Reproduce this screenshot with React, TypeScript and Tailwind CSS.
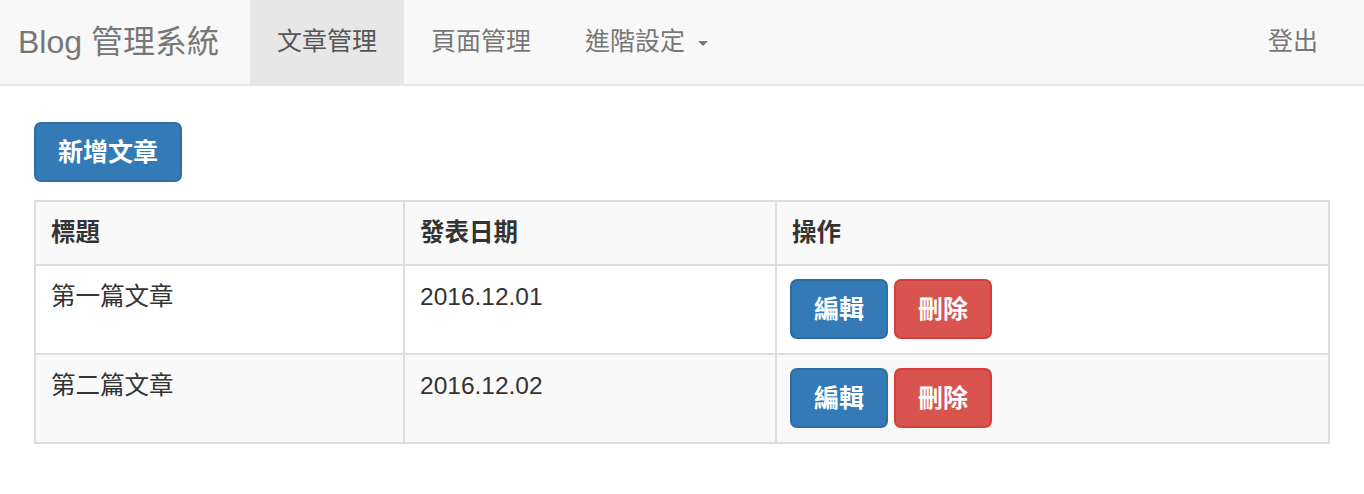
import React from "react";

const posts = [
  { title: "第一篇文章", date: "2016.12.01" },
  { title: "第二篇文章", date: "2016.12.02" },
];

function NavItem({ label, active, caret }: { label: string; active?: boolean; caret?: boolean }) {
  return (
    <a
      href="#"
      className={
        active
          ? "flex items-center h-full px-[27px] bg-[#e7e7e7] text-[#555]"
          : "flex items-center h-full px-[27px] text-[#777]"
      }
    >
      {label}
      {caret && (
        <span className="ml-[13px] mt-[2px] w-0 h-0 border-l-[5px] border-r-[5px] border-t-[5px] border-l-transparent border-r-transparent border-t-[#777]" />
      )}
    </a>
  );
}

function Btn({ children, kind }: { children: React.ReactNode; kind: "primary" | "danger" }) {
  return (
    <button
      className={
        kind === "primary"
          ? "h-[60px] px-[22px] rounded-[7px] border-2 border-[#2e6da4] bg-[#337ab7] text-white font-bold text-[25px] leading-none"
          : "h-[60px] px-[22px] rounded-[7px] border-2 border-[#d43f3a] bg-[#d9534f] text-white font-bold text-[25px] leading-none"
      }
    >
      {children}
    </button>
  );
}

export default function App() {
  return (
    <div
      className="min-h-[494px] bg-white text-[#333]"
      style={{ fontFamily: '"Liberation Sans", "Noto Sans CJK TC", sans-serif' }}
    >
      <nav className="flex h-[86px] bg-[#f8f8f8] border-b-2 border-[#e7e7e7] text-[25px]">
        <a href="#" className="flex items-center w-[250px] pl-[18px] text-[32px] text-[#777]">
          Blog 管理系統
        </a>
        <NavItem label="文章管理" active />
        <NavItem label="頁面管理" />
        <NavItem label="進階設定" caret />
        <div className="ml-auto pr-[19px] h-full">
          <NavItem label="登出" />
        </div>
      </nav>

      <main className="px-[34px] pt-[36px]">
        <Btn kind="primary">新增文章</Btn>

        <table className="mt-[18px] w-full border-collapse border-2 border-[#ddd] text-[24.5px] leading-[36px]">
          <thead>
            <tr className="bg-[#f9f9f9]">
              <th className="w-[369px] border-2 border-[#ddd] px-[15px] py-[13px] text-left font-bold">標題</th>
              <th className="w-[372px] border-2 border-[#ddd] px-[15px] py-[13px] text-left font-bold">發表日期</th>
              <th className="border-2 border-[#ddd] px-[15px] py-[13px] text-left font-bold">操作</th>
            </tr>
          </thead>
          <tbody>
            {posts.map((p, i) => (
              <tr key={p.date} className={i % 2 === 1 ? "bg-[#f9f9f9]" : "bg-white"}>
                <td className="border-2 border-[#ddd] px-[15px] py-[13px] align-top">{p.title}</td>
                <td className="border-2 border-[#ddd] px-[15px] py-[13px] align-top">{p.date}</td>
                <td className="border-2 border-[#ddd] px-[13px] pt-[13px] pb-[14px] align-top">
                  <div className="flex gap-[6px]">
                    <Btn kind="primary">編輯</Btn>
                    <Btn kind="danger">刪除</Btn>
                  </div>
                </td>
              </tr>
            ))}
          </tbody>
        </table>
      </main>
    </div>
  );
}
